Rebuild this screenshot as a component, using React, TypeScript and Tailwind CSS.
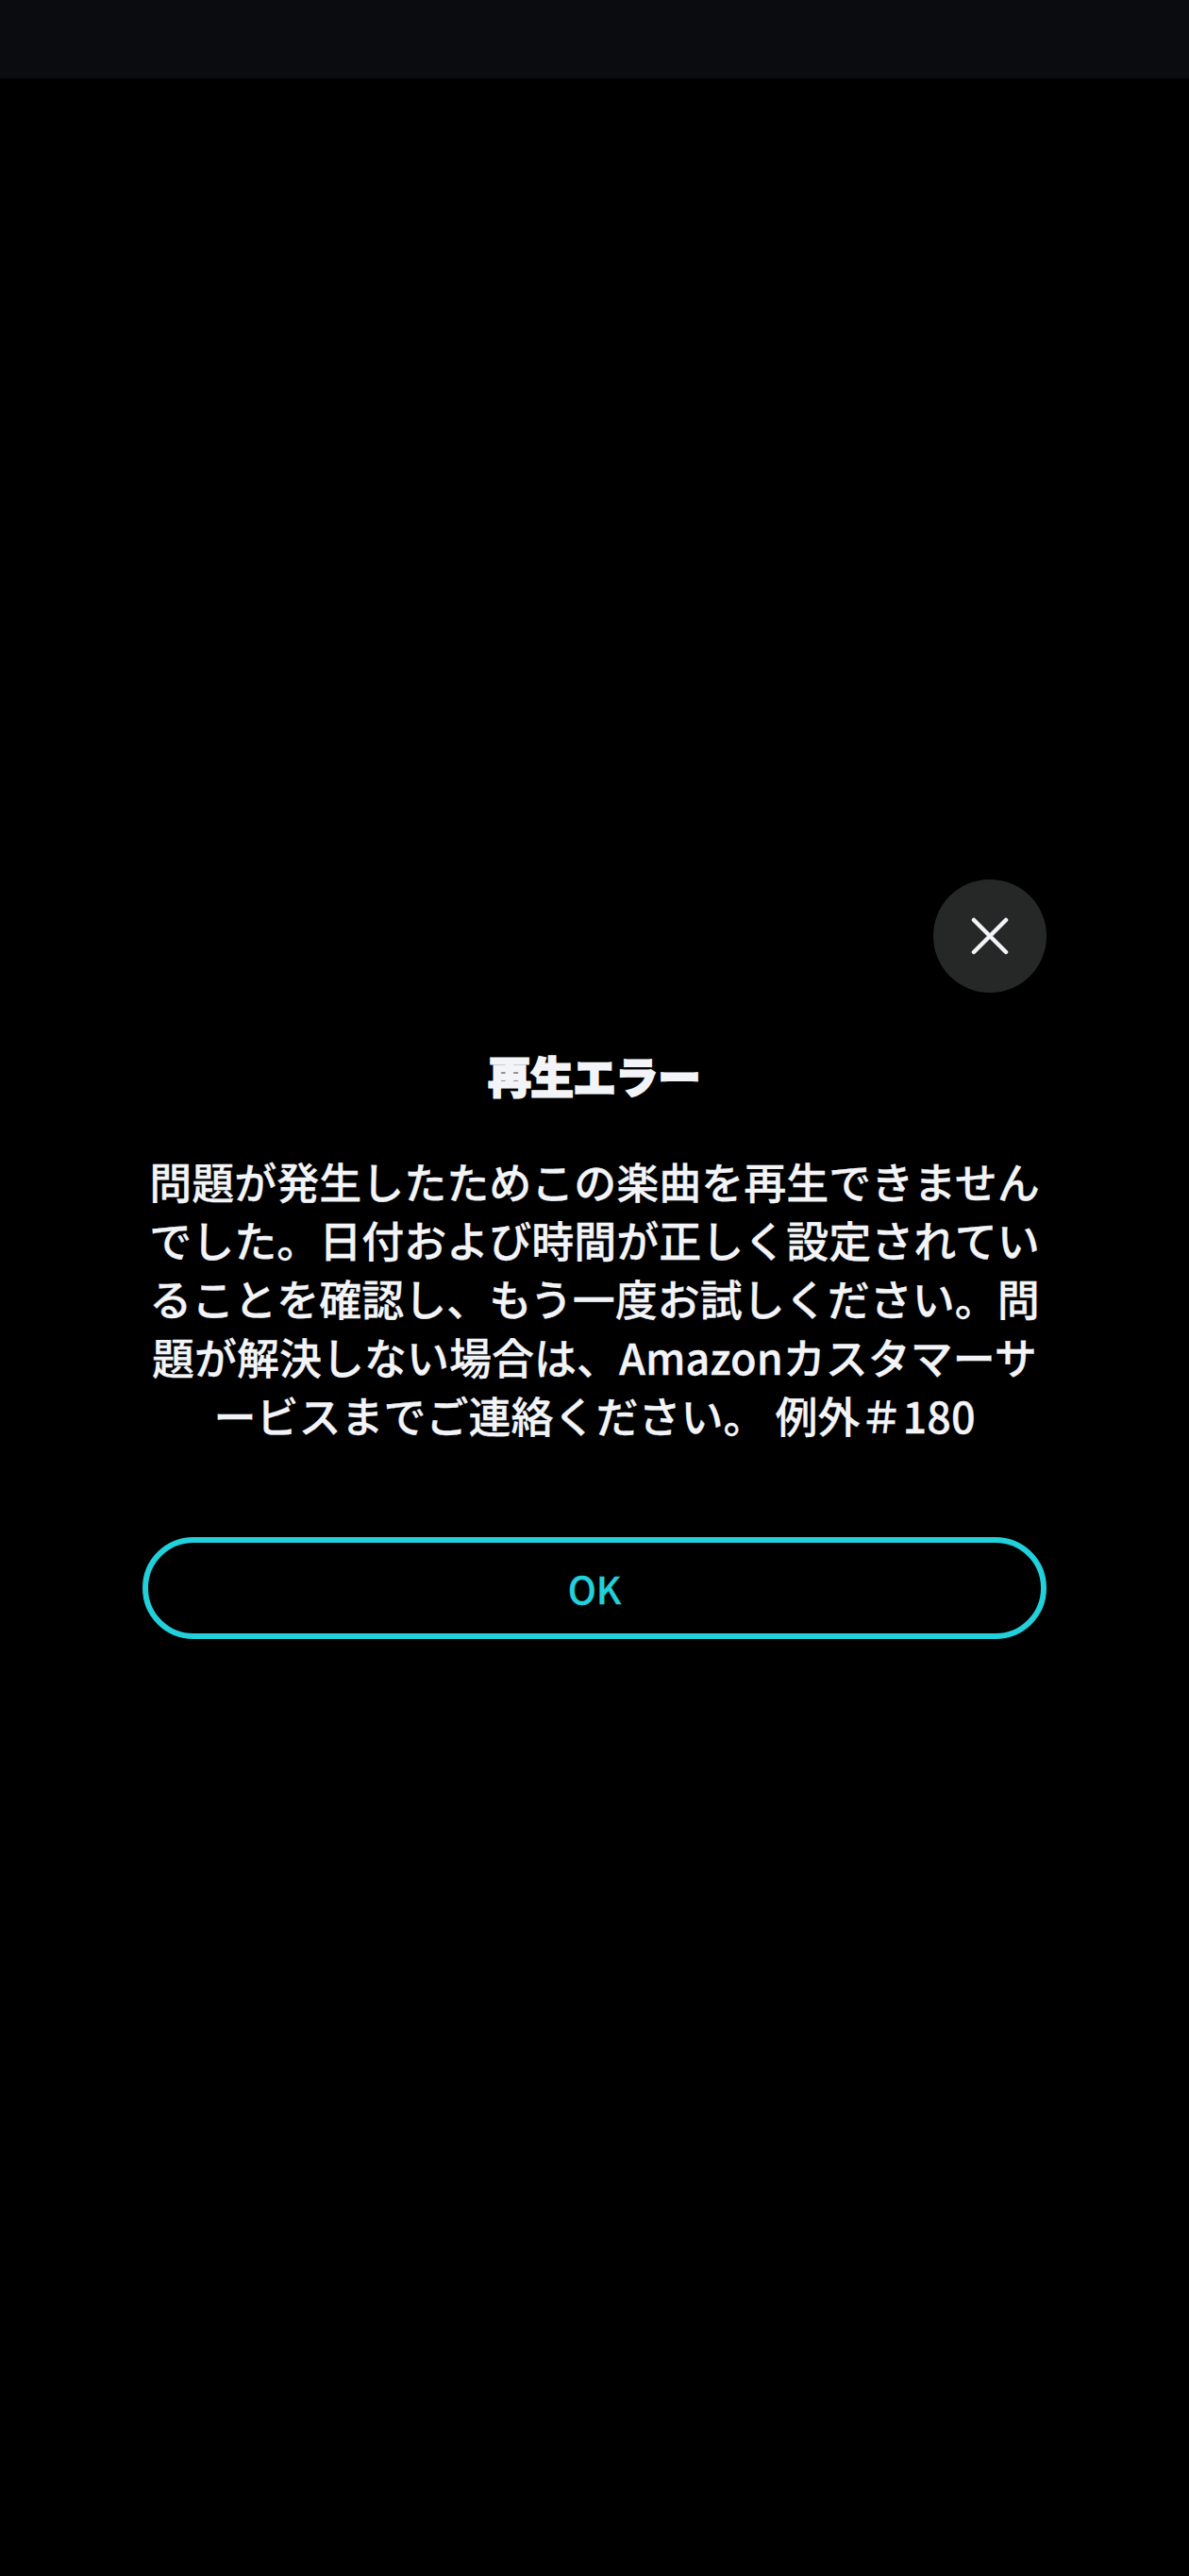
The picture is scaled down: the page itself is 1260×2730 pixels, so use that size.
import React from "react";

const lines = [
  "問題が発生したためこの楽曲を再生できません",
  "でした。日付および時間が正しく設定されてい",
  "ることを確認し、もう一度お試しください。問",
  "題が解決しない場合は、Amazonカスタマーサ",
  "ービスまでご連絡ください。 例外＃180",
];

export default function App() {
  return (
    <div
      className="w-[1260px] min-h-[2730px] bg-black flex flex-col"
      style={{ fontFamily: '"Noto Sans CJK JP", "Noto Sans", sans-serif' }}
    >
      <div className="h-[83px] w-full bg-[#0b0c10]" />
      <div className="mt-[849px] px-[151px] flex flex-col">
        <div className="flex justify-end">
          <button className="w-[120px] h-[120px] rounded-full bg-[#262828] flex items-center justify-center">
            <svg width="40" height="40" viewBox="0 0 40 40" fill="none">
              <path
                d="M3 3 L37 37 M37 3 L3 37"
                stroke="#f2f4f8"
                strokeWidth="4.5"
                strokeLinecap="round"
              />
            </svg>
          </button>
        </div>
        <h1 className="mt-[58px] text-center text-[45px] leading-[60px] font-bold text-[#f2f4f8] [-webkit-text-stroke:3px_#f2f4f8]">
          再生エラー
        </h1>
        <p className="mt-[51px] text-center text-[45px] leading-[62px] font-medium text-[#f2f4f8] [-webkit-text-stroke:0.3px_#f2f4f8]">
          {lines.map((l, i) => (
            <span key={i} className="block whitespace-pre">
              {l}
            </span>
          ))}
        </p>
        <button className="mt-[98px] h-[108px] w-full rounded-full border-[6px] border-[#22d0db] flex items-center justify-center text-[40px] font-medium text-[#22d0db] [-webkit-text-stroke:0.3px_#22d0db]">
          OK
        </button>
      </div>
    </div>
  );
}
